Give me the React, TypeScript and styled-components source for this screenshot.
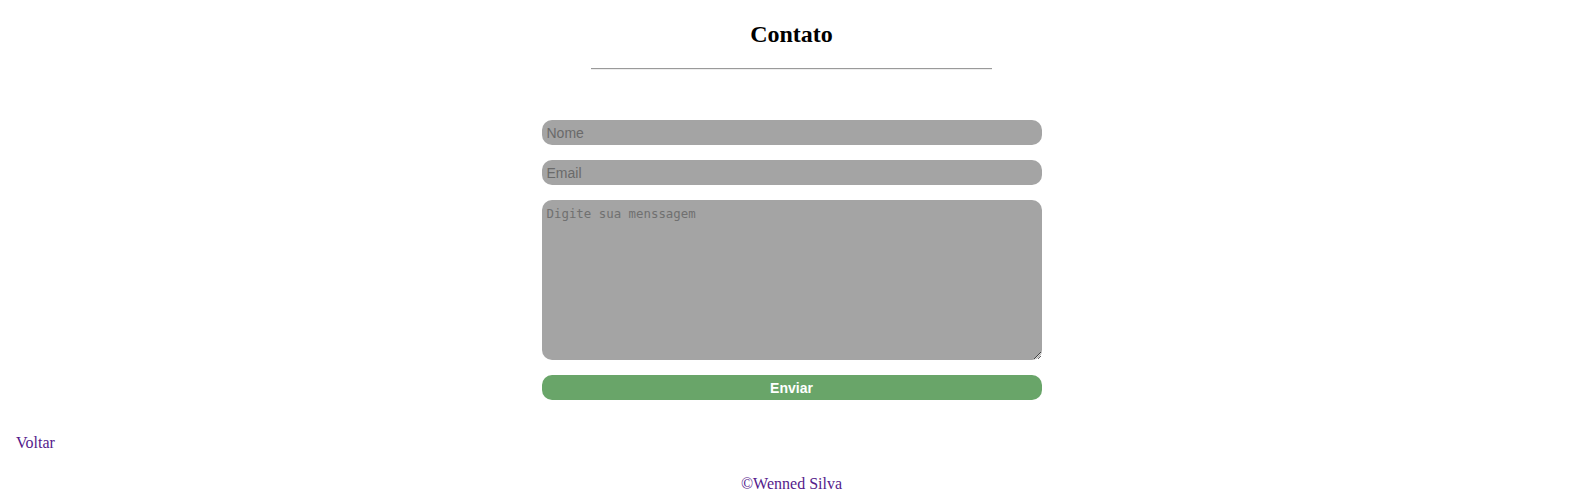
import React from "react";
import styled, { createGlobalStyle } from "styled-components";

const Global = createGlobalStyle`
  html, body { margin: 0; padding: 0; background: #fff; }
  body { margin: 8px; font-family: "Liberation Serif", "Times New Roman", serif; font-size: 16px; }
`;

const Page = styled.div`
  display: flex;
  flex-direction: column;
`;

const Main = styled.main`
  display: flex;
  flex-direction: column;
  align-items: center;
  padding-left: 12px;
`;

const Title = styled.h2`
  font-size: 24px;
  font-weight: bold;
  margin: 12.9px 0 0;
  line-height: 27.6px;
  color: #000;
`;

const Rule = styled.hr`
  width: 401px;
  margin: 19.9px 0 0;
  border: 0;
  border-top: 1px solid #9a9a9a;
  border-bottom: 1px solid #eeeeee;
  height: 0;
`;

const Form = styled.form`
  display: flex;
  flex-direction: column;
  gap: 15px;
  width: 500px;
  margin-top: 50px;
`;

const Field = styled.input`
  box-sizing: border-box;
  width: 100%;
  height: 25px;
  border: none;
  border-radius: 10px;
  background: #a4a4a4;
  padding: 0 5px;
  font-family: "Liberation Sans", Arial, sans-serif;
  font-size: 14px;
  color: #222;
  outline: none;
  &::placeholder { color: #6a6a6a; }
`;

const Message = styled.textarea`
  box-sizing: border-box;
  width: 100%;
  height: 160px;
  border: none;
  border-radius: 10px;
  background: #a4a4a4;
  padding: 6px 5px;
  font-family: "DejaVu Sans Mono", "Liberation Mono", monospace;
  font-size: 12.4px;
  color: #222;
  outline: none;
  resize: vertical;
  &::placeholder { color: #707070; }
`;

const Submit = styled.button`
  box-sizing: border-box;
  width: 100%;
  height: 25px;
  border: none;
  border-radius: 10px;
  background: #69a569;
  color: #fff;
  font-family: "Liberation Sans", Arial, sans-serif;
  font-size: 14px;
  font-weight: bold;
  cursor: pointer;
`;

const Back = styled.a`
  margin-top: 34px;
  margin-left: 8px;
  color: #551a8b;
  text-decoration: none;
  line-height: 18px;
  align-self: flex-start;
`;

const Footer = styled.footer`
  margin-top: 23px;
  padding-left: 12px;
  text-align: center;
  color: #551a8b;
  line-height: 18px;
`;

export default function App() {
  return (
    <Page>
      <Global />
      <Main>
        <Title>Contato</Title>
        <Rule />
        <Form onSubmit={(e) => e.preventDefault()}>
          <Field type="text" placeholder="Nome" />
          <Field type="email" placeholder="Email" />
          <Message placeholder="Digite sua menssagem" />
          <Submit type="submit">Enviar</Submit>
        </Form>
      </Main>
      <Back href="#">Voltar</Back>
      <Footer>©Wenned Silva</Footer>
    </Page>
  );
}
